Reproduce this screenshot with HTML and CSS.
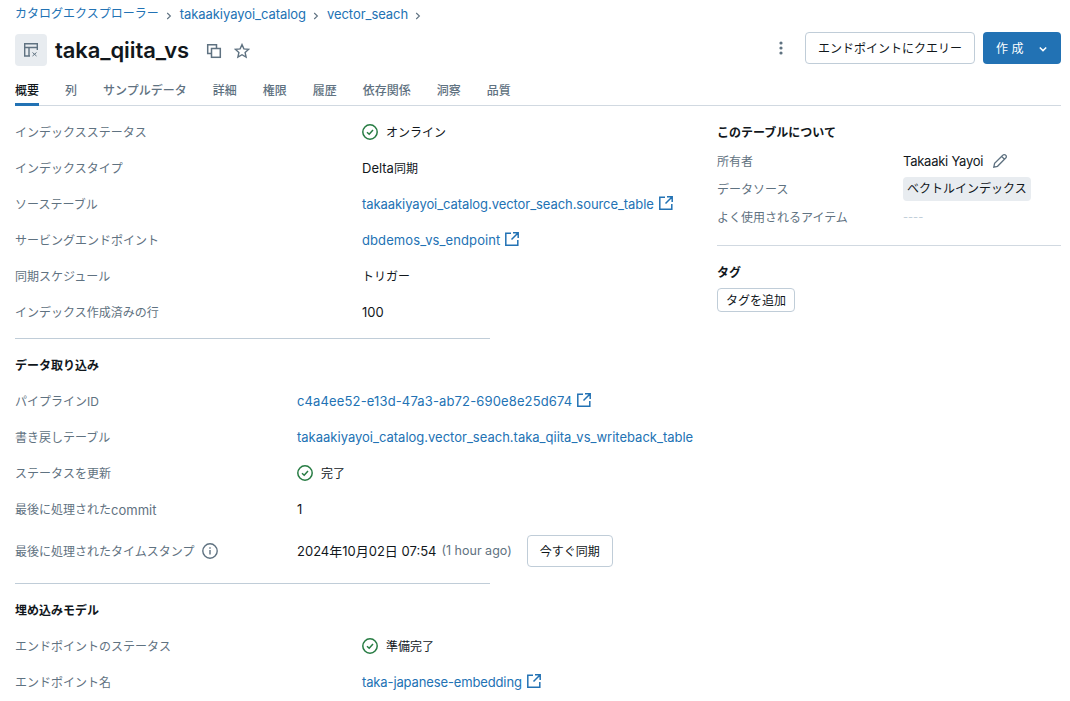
FILE: index.html
```html
<!DOCTYPE html>
<html lang="ja">
<head>
<meta charset="utf-8">
<title>taka_qiita_vs</title>
<link rel="stylesheet" href="styles.css">
</head>
<body>
<svg class="defs" width="0" height="0">
  <symbol id="ext" viewBox="0 0 14 14"><path d="M6 1.2H.8v12h12V8M8 .8h5.2V6M13 1 6.5 7.5" fill="none" stroke="currentColor" stroke-width="1.5"/></symbol>
  <symbol id="ok" viewBox="0 0 16 16"><circle cx="8" cy="8" r="7.2" fill="none" stroke="currentColor" stroke-width="1.5"/><path d="M5 8.2 7.2 10.2 11 6" fill="none" stroke="currentColor" stroke-width="1.5"/></symbol>
  <symbol id="chev" viewBox="0 0 6 8"><path d="M1.2 1 4.4 4 1.2 7" fill="none" stroke="currentColor" stroke-width="1.1"/></symbol>
</svg>
<nav class="crumbs">
  <a>カタログエクスプローラー</a><svg class="sep"><use href="#chev"/></svg><a>takaakiyayoi_catalog</a><svg class="sep"><use href="#chev"/></svg><a>vector_seach</a><svg class="sep"><use href="#chev"/></svg>
</nav>
<header class="head">
  <div class="tile">
    <svg width="16" height="16" viewBox="0 0 16 16" fill="none" stroke="#5f7281" stroke-width="1.4"><path d="M7 14H1.7V1.7h12.6V8M1.7 5.5h12.6M6 5.5V14"/><path d="M9.5 10.5l4 3.5M13.5 10.5l-4 3.5" stroke-width="1"/></svg>
  </div>
  <h1>taka_qiita_vs</h1>
  <svg class="copy" width="16" height="16" viewBox="0 0 16 16" fill="none" stroke="#5f7281" stroke-width="1.5"><path d="M10.5 5V1.7H1.7v8.8H5"/><rect x="5.5" y="5.5" width="8.8" height="8.8"/></svg>
  <svg class="star" width="16" height="16" viewBox="0 0 16 16" fill="none" stroke="#5f7281" stroke-width="1.4"><path d="M8 1.6 9.9 5.9l4.6.5-3.4 3.1 1 4.6L8 11.7l-4.1 2.4 1-4.6L1.5 6.4l4.6-.5z"/></svg>
  <div class="actions">
    <svg class="kebab" width="4" height="14" viewBox="0 0 4 14" fill="#5f7281"><circle cx="2" cy="2" r="1.6"/><circle cx="2" cy="7" r="1.6"/><circle cx="2" cy="12" r="1.6"/></svg>
    <button class="btn query">エンドポイントにクエリー</button>
    <button class="primary"><span>作 成</span><svg width="10" height="10" viewBox="0 0 10 10" fill="none" stroke="#fff" stroke-width="1.5"><path d="M1.8 3.5 5 6.6l3.2-3.1"/></svg></button>
  </div>
</header>
<div class="tabs">
  <span class="tab active">概要</span><span class="tab">列</span><span class="tab">サンプルデータ</span><span class="tab">詳細</span><span class="tab">権限</span><span class="tab">履歴</span><span class="tab">依存関係</span><span class="tab">洞察</span><span class="tab">品質</span>
</div>
<main class="layout">
  <div class="left">
    <section class="rows wide">
      <div class="label">インデックスステータス</div><div class="value"><svg class="okicon"><use href="#ok"/></svg><span class="cjk">オンライン</span></div>
      <div class="label">インデックスタイプ</div><div class="value">Delta<span class="cjk">同期</span></div>
      <div class="label">ソーステーブル</div><div class="value"><a class="tight">takaakiyayoi_catalog.vector_seach.source_table</a><svg class="exticon"><use href="#ext"/></svg></div>
      <div class="label">サービングエンドポイント</div><div class="value"><a class="wider">dbdemos_vs_endpoint</a><svg class="exticon"><use href="#ext"/></svg></div>
      <div class="label">同期スケジュール</div><div class="value"><span class="cjk">トリガー</span></div>
      <div class="label">インデックス作成済みの行</div><div class="value">100</div>
    </section>
    <hr class="rule">
    <h2 class="section-title">データ取り込み</h2>
    <section class="rows narrow">
      <div class="label">パイプラインID</div><div class="value"><a class="loose">c4a4ee52-e13d-47a3-ab72-690e8e25d674</a><svg class="exticon"><use href="#ext"/></svg></div>
      <div class="label">書き戻しテーブル</div><div class="value"><a>takaakiyayoi_catalog.vector_seach.taka_qiita_vs_writeback_table</a></div>
      <div class="label">ステータスを更新</div><div class="value"><svg class="okicon"><use href="#ok"/></svg><span class="cjk">完了</span></div>
      <div class="label">最後に処理された<span class="latin">commit</span></div><div class="value">1</div>
      <div class="label">最後に処理されたタイムスタンプ<svg class="info" width="16" height="16" viewBox="0 0 16 16" fill="none" stroke="#5f7281" stroke-width="1.4"><circle cx="8" cy="8" r="7.2"/><path d="M8 7v4.5M8 4.2v1.6"/></svg></div>
      <div class="value">2024年10月02日&nbsp;07:54<span class="ago">(1 hour ago)</span><button class="btn sync">今すぐ同期</button></div>
    </section>
    <hr class="rule">
    <h2 class="section-title">埋め込みモデル</h2>
    <section class="rows wide">
      <div class="label">エンドポイントのステータス</div><div class="value"><svg class="okicon"><use href="#ok"/></svg><span class="cjk">準備完了</span></div>
      <div class="label">エンドポイント名</div><div class="value"><a class="narrower">taka-japanese-embedding</a><svg class="exticon"><use href="#ext"/></svg></div>
    </section>
  </div>
  <aside class="right">
    <h2 class="side-title">このテーブルについて</h2>
    <div class="meta">
      <div class="label">所有者</div><div class="value"><span class="owner">Takaaki Yayoi</span><svg class="pencil" width="16" height="16" viewBox="0 0 16 16" fill="none" stroke="#5f7281" stroke-width="1.3"><path d="M1.8 14.2 2.6 10.4 10.8 2.2a1.9 1.9 0 0 1 2.9 0 1.9 1.9 0 0 1 0 2.9L5.5 13.3zM9.6 3.4l2.9 2.9"/></svg></div>
      <div class="label">データソース</div><div class="value"><span class="chip">ベクトルインデックス</span></div>
      <div class="label">よく使用されるアイテム</div><div class="value"><span class="dash">----</span></div>
    </div>
    <hr class="side-rule">
    <h2 class="side-title tags">タグ</h2>
    <button class="btn addtag">タグを追加</button>
  </aside>
</main>
</body>
</html>
```

FILE: styles.css
```css
* { box-sizing: border-box; }
html, body { margin: 0; height: 701px; overflow: hidden; }
body {
  padding: 0 9px 0 15px;
  background: #fff;
  color: #11171c;
  font-family: Inter, "Noto Sans CJK JP", sans-serif;
  font-size: 13px;
  line-height: 20px;
}
.defs { position: absolute; }
a { color: #2272b4; }

.crumbs { display: flex; align-items: center; height: 27px; color: #2272b4; font-size: 13px; letter-spacing: -0.05px; }
.crumbs a:first-child { font-size: 12px; letter-spacing: 0; }
.sep { width: 6px; height: 8px; margin: 4px 8px 0 7px; color: #5f7281; }

.head { display: flex; align-items: center; height: 33px; margin-top: 6px; }
.tile { width: 32px; height: 32px; border-radius: 4px; background: #e8ecf0; display: flex; align-items: center; justify-content: center; }
h1 { margin: 1px 0 0 8px; font-size: 22px; line-height: 32px; font-weight: 600; letter-spacing: -0.1px; }
.copy { margin: 3px 0 0 17px; }
.star { margin: 3px 0 0 12px; }
.actions { margin: -1px 0 0 auto; display: flex; align-items: center; align-self: flex-start; }
.kebab { margin-right: 22px; }
.btn { font-family: inherit; font-size: 12px; line-height: 20px; color: #11171c; background: #fff; border: 1px solid #c0cdd8; border-radius: 4px; padding: 1px 0 0; }
.query { width: 170px; height: 32px; }
.primary { margin-left: 8px; width: 78px; height: 32px; border: 0; border-radius: 4px; background: #2272b4; color: #fff; font: 12px/20px Inter, "Noto Sans CJK JP", sans-serif; display: flex; align-items: center; padding: 1px 13px 0; justify-content: space-between; }

.tabs { display: flex; gap: 26px; height: 40px; border-bottom: 1px solid #d1d9e1; font-size: 12px; color: #5f7281; }
.tab { height: 40px; padding-top: 15px; font-weight: 500; }
.tab.active { color: #11171c; border-bottom: 3px solid #2272b4; }

.layout { display: grid; grid-template-columns: 475px 344px; column-gap: 227px; padding-top: 8px; }
.right { padding-top: 9px; }
.rows { display: grid; grid-auto-rows: 36px; align-items: center; }
.wide { grid-template-columns: 347px auto; }
.narrow { grid-template-columns: 282px auto; grid-template-rows: repeat(4, 36px) 48px; }
.label { font-size: 12px; color: #5f7281; display: flex; align-items: center; white-space: nowrap; padding-top: 2px; }
.latin { font-size: 13px; }
.value { display: flex; align-items: center; white-space: nowrap; }
.tight { letter-spacing: -0.065px; }
.loose { letter-spacing: 0.14px; }
.wider { letter-spacing: 0.1px; }
.narrower { letter-spacing: -0.13px; }
.cjk { font-size: 12px; padding-top: 2px; }
.okicon { width: 16px; height: 16px; color: #277c43; margin-right: 8px; }
.exticon { width: 14px; height: 14px; margin-left: 5px; color: #2272b4; position: relative; top: -1px; }
.info { margin-left: 8px; position: relative; top: -1px; }
.ago { color: #5f7281; font-size: 12.5px; margin-left: 5px; }
.sync { width: 86px; height: 32px; margin-left: 15px; }

.rule { width: 475px; height: 1px; border: 0; background: #c0cdd8; margin: 8px 0 16px; }
.section-title { margin: 0 0 7px; padding-top: 1px; font-size: 12px; line-height: 20px; font-weight: 600; }

.side-title { margin: 0; font-size: 12px; line-height: 20px; font-weight: 600; }
.meta { display: grid; grid-template-columns: 186px auto; grid-auto-rows: 28px; align-items: center; margin-top: 4px; }
.owner { letter-spacing: -0.25px; }
.chip { background: #e8ecf0; border-radius: 4px; font-size: 12px; color: #11171c; padding: 2px 4px; line-height: 20px; }
.dash { color: #c0cdd8; font-size: 11px; }
.pencil { margin-left: 9px; }
.side-rule { height: 1px; border: 0; background: #d1d9e1; margin: 14px 0 16px; }
.tags { margin-bottom: 5px; padding-top: 1px; }
.addtag { display: block; width: 78px; height: 24px; line-height: 22px; }
```
